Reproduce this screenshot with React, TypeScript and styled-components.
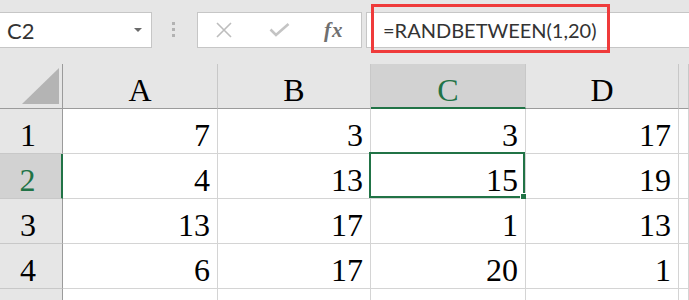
import { Fragment } from 'react';
import styled, { createGlobalStyle } from 'styled-components';

const GlobalStyle = createGlobalStyle`
  html, body {
    margin: 0;
    padding: 0;
    background: #ffffff;
  }
  body {
    width: 689px;
    height: 300px;
    overflow: hidden;
  }
`;

const Page = styled.div`
  width: 689px;
  height: 300px;
  overflow: hidden;
  display: flex;
  flex-direction: column;
  background: #ffffff;
`;

const Toolbar = styled.div`
  flex: 0 0 64px;
  box-sizing: border-box;
  display: flex;
  align-items: flex-start;
  padding-top: 12px;
  background: #e6e6e6;
`;

const NameBox = styled.div`
  width: 152px;
  height: 36px;
  box-sizing: border-box;
  display: flex;
  align-items: center;
  justify-content: space-between;
  padding: 0 9px 0 7px;
  background: #ffffff;
  border: 1px solid #c6c6c6;
  border-left: none;
  font-family: Lato, "Liberation Sans", sans-serif;
  font-size: 22px;
  color: #333333;
`;

const Caret = styled.span`
  width: 0;
  height: 0;
  border-left: 4px solid transparent;
  border-right: 4px solid transparent;
  border-top: 4px solid #6a6a6a;
`;

const Grip = styled.div`
  width: 3px;
  margin: 10px 22px 0 20px;
  display: flex;
  flex-direction: column;
  gap: 3px;

  span {
    width: 3px;
    height: 3px;
    background: #b2b2b2;
  }
`;

const IconBox = styled.div`
  width: 165px;
  height: 36px;
  box-sizing: border-box;
  display: flex;
  align-items: center;
  background: #ffffff;
  border: 1px solid #c6c6c6;
`;

const IconSlot = styled.span<{ $gap: number }>`
  display: flex;
  align-items: center;
  margin-left: ${({ $gap }) => $gap}px;
`;

const Fx = styled.span`
  font-family: "Liberation Serif", serif;
  font-style: italic;
  font-weight: bold;
  font-size: 21px;
  color: #6f6f6f;
  letter-spacing: 1px;
`;

const FormulaBox = styled.div`
  position: relative;
  flex: 1;
  height: 36px;
  margin-left: 4px;
  box-sizing: border-box;
  display: flex;
  align-items: center;
  padding-left: 16px;
  background: #ffffff;
  border: 1px solid #c6c6c6;
  border-right: none;
  font-family: Lato, "Liberation Sans", sans-serif;
  font-size: 20px;
  color: #333333;
`;

const Highlight = styled.div`
  position: absolute;
  left: 4px;
  top: -9px;
  width: 239px;
  height: 49px;
  box-sizing: border-box;
  border: 3px solid #ef3b3b;
  pointer-events: none;
`;

const Sheet = styled.div`
  display: grid;
  grid-template-columns: 63px 155px 153px 155px 153px 1fr;
  grid-auto-rows: 45px;
`;

type Kind = 'corner' | 'col' | 'row' | 'cell';

const Cell = styled.div<{ $kind: Kind; $active?: boolean }>`
  position: relative;
  box-sizing: border-box;
  display: flex;
  align-items: flex-start;
  padding-top: 10px;
  line-height: 33px;
  font-family: "Liberation Serif", "Times New Roman", serif;
  font-size: 32px;
  color: ${({ $active }) => ($active ? '#217346' : '#000000')};
  background: ${({ $kind, $active }) =>
    $kind === 'cell' ? '#ffffff' : $active ? '#d2d2d2' : '#e6e6e6'};
  justify-content: ${({ $kind }) => ($kind === 'cell' ? 'flex-end' : 'center')};
  padding-right: ${({ $kind }) => ($kind === 'cell' ? '7px' : $kind === 'row' ? '6px' : '0')};
  border-right: ${({ $kind, $active }) =>
    $kind === 'row' || $kind === 'corner'
      ? $active
        ? '2px solid #217346'
        : '1px solid #9b9b9b'
      : $kind === 'col'
      ? '1px solid #c8c8c8'
      : '1px solid #d4d4d4'};
  border-bottom: ${({ $kind, $active }) =>
    $kind === 'col' || $kind === 'corner'
      ? $active
        ? '2px solid #217346'
        : '1px solid #9b9b9b'
      : $kind === 'row'
      ? '1px solid #c8c8c8'
      : '1px solid #d4d4d4'};
`;

const Corner = styled(Cell)`
  padding: 0 3px 4px 0;
  align-items: flex-end;
  justify-content: flex-end;
`;

const Selection = styled.div`
  position: absolute;
  top: -2px;
  left: -2px;
  right: 0;
  bottom: 0;
  border: 2px solid #217346;
  pointer-events: none;

  &::after {
    content: '';
    position: absolute;
    right: -5px;
    bottom: -5px;
    width: 6px;
    height: 6px;
    background: #217346;
    border: 1px solid #ffffff;
  }
`;

const columns = ['A', 'B', 'C', 'D', ''];

// last row is only a sliver at the bottom edge, so it carries no label
const rows: { label: string; values: number[] }[] = [
  { label: '1', values: [7, 3, 3, 17] },
  { label: '2', values: [4, 13, 15, 19] },
  { label: '3', values: [13, 17, 1, 13] },
  { label: '4', values: [6, 17, 20, 1] },
  { label: '', values: [] },
];

const activeCol = 2;
const activeRow = 1;

const App = () => {
  return (
    <Page>
      <GlobalStyle />
      <Toolbar>
        <NameBox>
          C2
          <Caret />
        </NameBox>
        <Grip>
          <span />
          <span />
          <span />
        </Grip>
        <IconBox>
          <IconSlot $gap={18}>
            <svg width="16" height="16" viewBox="0 0 16 16">
              <path d="M1 1 L15 15 M15 1 L1 15" stroke="#bdbdbd" strokeWidth="1.6" fill="none" />
            </svg>
          </IconSlot>
          <IconSlot $gap={37}>
            <svg width="21" height="14" viewBox="0 0 21 14">
              <path d="M1.5 6.5 L7 12 L19.5 1" stroke="#c4c4c4" strokeWidth="2.6" fill="none" />
            </svg>
          </IconSlot>
          <IconSlot $gap={34}>
            <Fx>fx</Fx>
          </IconSlot>
        </IconBox>
        <FormulaBox>
          =RANDBETWEEN(1,20)
          <Highlight />
        </FormulaBox>
      </Toolbar>

      <Sheet>
        <Corner $kind="corner">
          <svg width="37" height="36" viewBox="0 0 37 36">
            <polygon points="37,0 37,36 0,36" fill="#b4b4b4" />
          </svg>
        </Corner>
        {columns.map((c, i) => (
          <Cell key={'h' + i} $kind="col" $active={i === activeCol}>
            {c}
          </Cell>
        ))}

        {rows.map((r, ri) => (
          <Fragment key={'r' + ri}>
            <Cell $kind="row" $active={ri === activeRow}>
              {r.label}
            </Cell>
            {columns.map((_, ci) => (
              <Cell key={ri + '-' + ci} $kind="cell">
                {r.values[ci]}
                {ri === activeRow && ci === activeCol && <Selection />}
              </Cell>
            ))}
          </Fragment>
        ))}
      </Sheet>
    </Page>
  );
};

export default App;
